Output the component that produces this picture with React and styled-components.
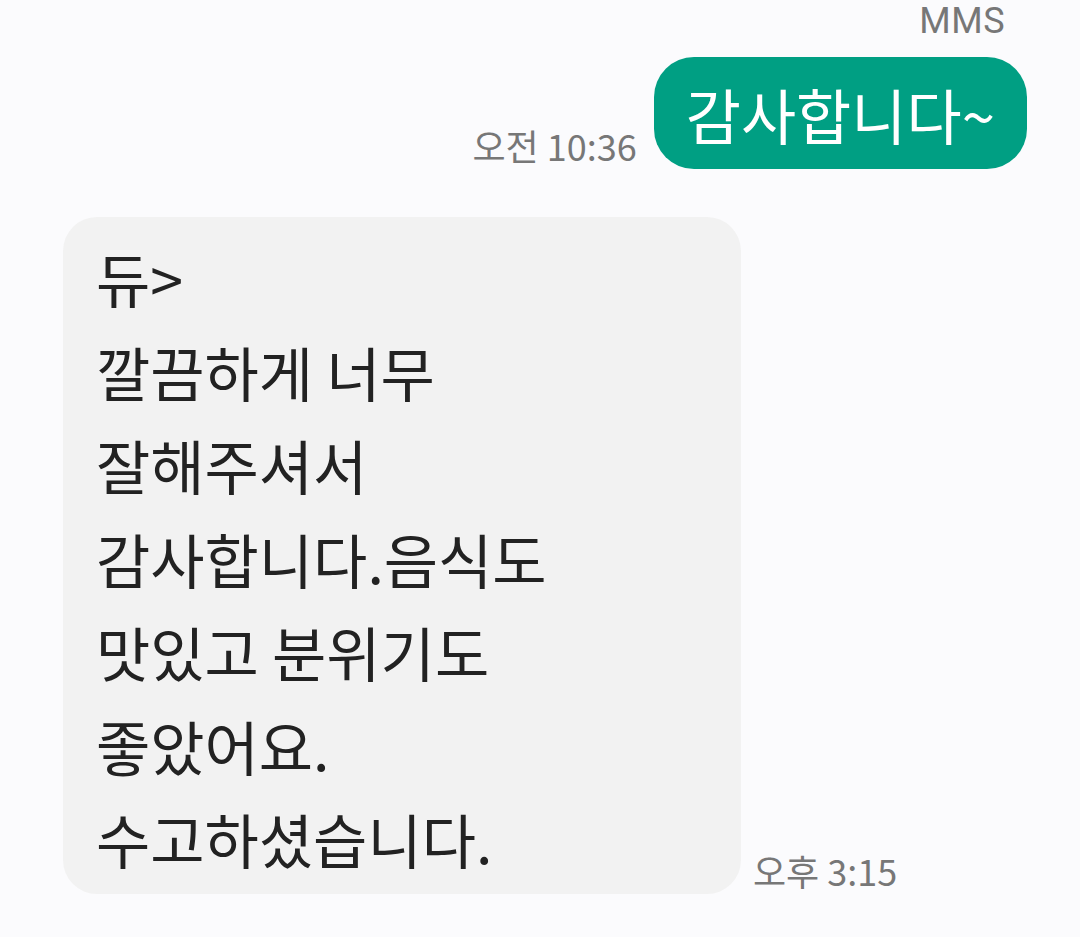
import React from 'react';
import styled, { createGlobalStyle } from 'styled-components';

const GlobalStyle = createGlobalStyle`
  html, body {
    margin: 0;
    padding: 0;
    background: #fbfbfd;
  }
  body {
    font-family: "Noto Sans CJK KR", "Noto Sans", sans-serif;
  }
`;

const Thread = styled.div`
  width: 1080px;
  height: 937px;
  box-sizing: border-box;
  padding: 0 53px 0 63px;
  display: flex;
  flex-direction: column;
  overflow: hidden;
`;

const TypeLabel = styled.div`
  align-self: flex-end;
  margin-right: 22px;
  height: 57px;
  font-size: 36px;
  line-height: 42px;
  letter-spacing: 0.5px;
  color: #777777;
  font-family: "Roboto", "Noto Sans CJK KR", sans-serif;
`;

const Row = styled.div`
  display: flex;
  align-items: flex-end;
  justify-content: ${(p) => (p.$out ? 'flex-end' : 'flex-start')};
  gap: ${(p) => (p.$out ? '17px' : '12px')};
  margin-top: ${(p) => p.$top || 0}px;
`;

const Time = styled.span`
  font-size: 36px;
  line-height: 44px;
  color: #777777;
  margin-bottom: ${(p) => p.$bottom || 0}px;
  white-space: nowrap;
`;

const OutBubble = styled.div`
  background: #009f83;
  color: #ffffff;
  border-radius: 40px;
  padding: 0 32px;
  height: 112px;
  display: flex;
  align-items: center;
  font-size: 60px;
  white-space: nowrap;
`;

const InBubble = styled.div`
  box-sizing: border-box;
  width: 678px;
  background: #f2f2f2;
  color: #222222;
  border-radius: 34px;
  padding: 14px 33px 8px;
  font-size: 59px;
  line-height: 93.5px;
`;

const Line = styled.div`
  white-space: nowrap;
`;

const lines = [
  '듀>',
  '깔끔하게 너무',
  '잘해주셔서',
  '감사합니다.음식도',
  '맛있고 분위기도',
  '좋았어요.',
  '수고하셨습니다.',
];

export default function App() {
  return (
    <>
      <GlobalStyle />
      <Thread>
        <TypeLabel>MMS</TypeLabel>
        <Row $out>
          <Time $bottom={2}>오전 10:36</Time>
          <OutBubble>감사합니다~</OutBubble>
        </Row>
        <Row $top={48}>
          <InBubble>
            {lines.map((l, i) => (
              <Line key={i}>{l}</Line>
            ))}
          </InBubble>
          <Time $bottom={2}>오후 3:15</Time>
        </Row>
      </Thread>
    </>
  );
}
